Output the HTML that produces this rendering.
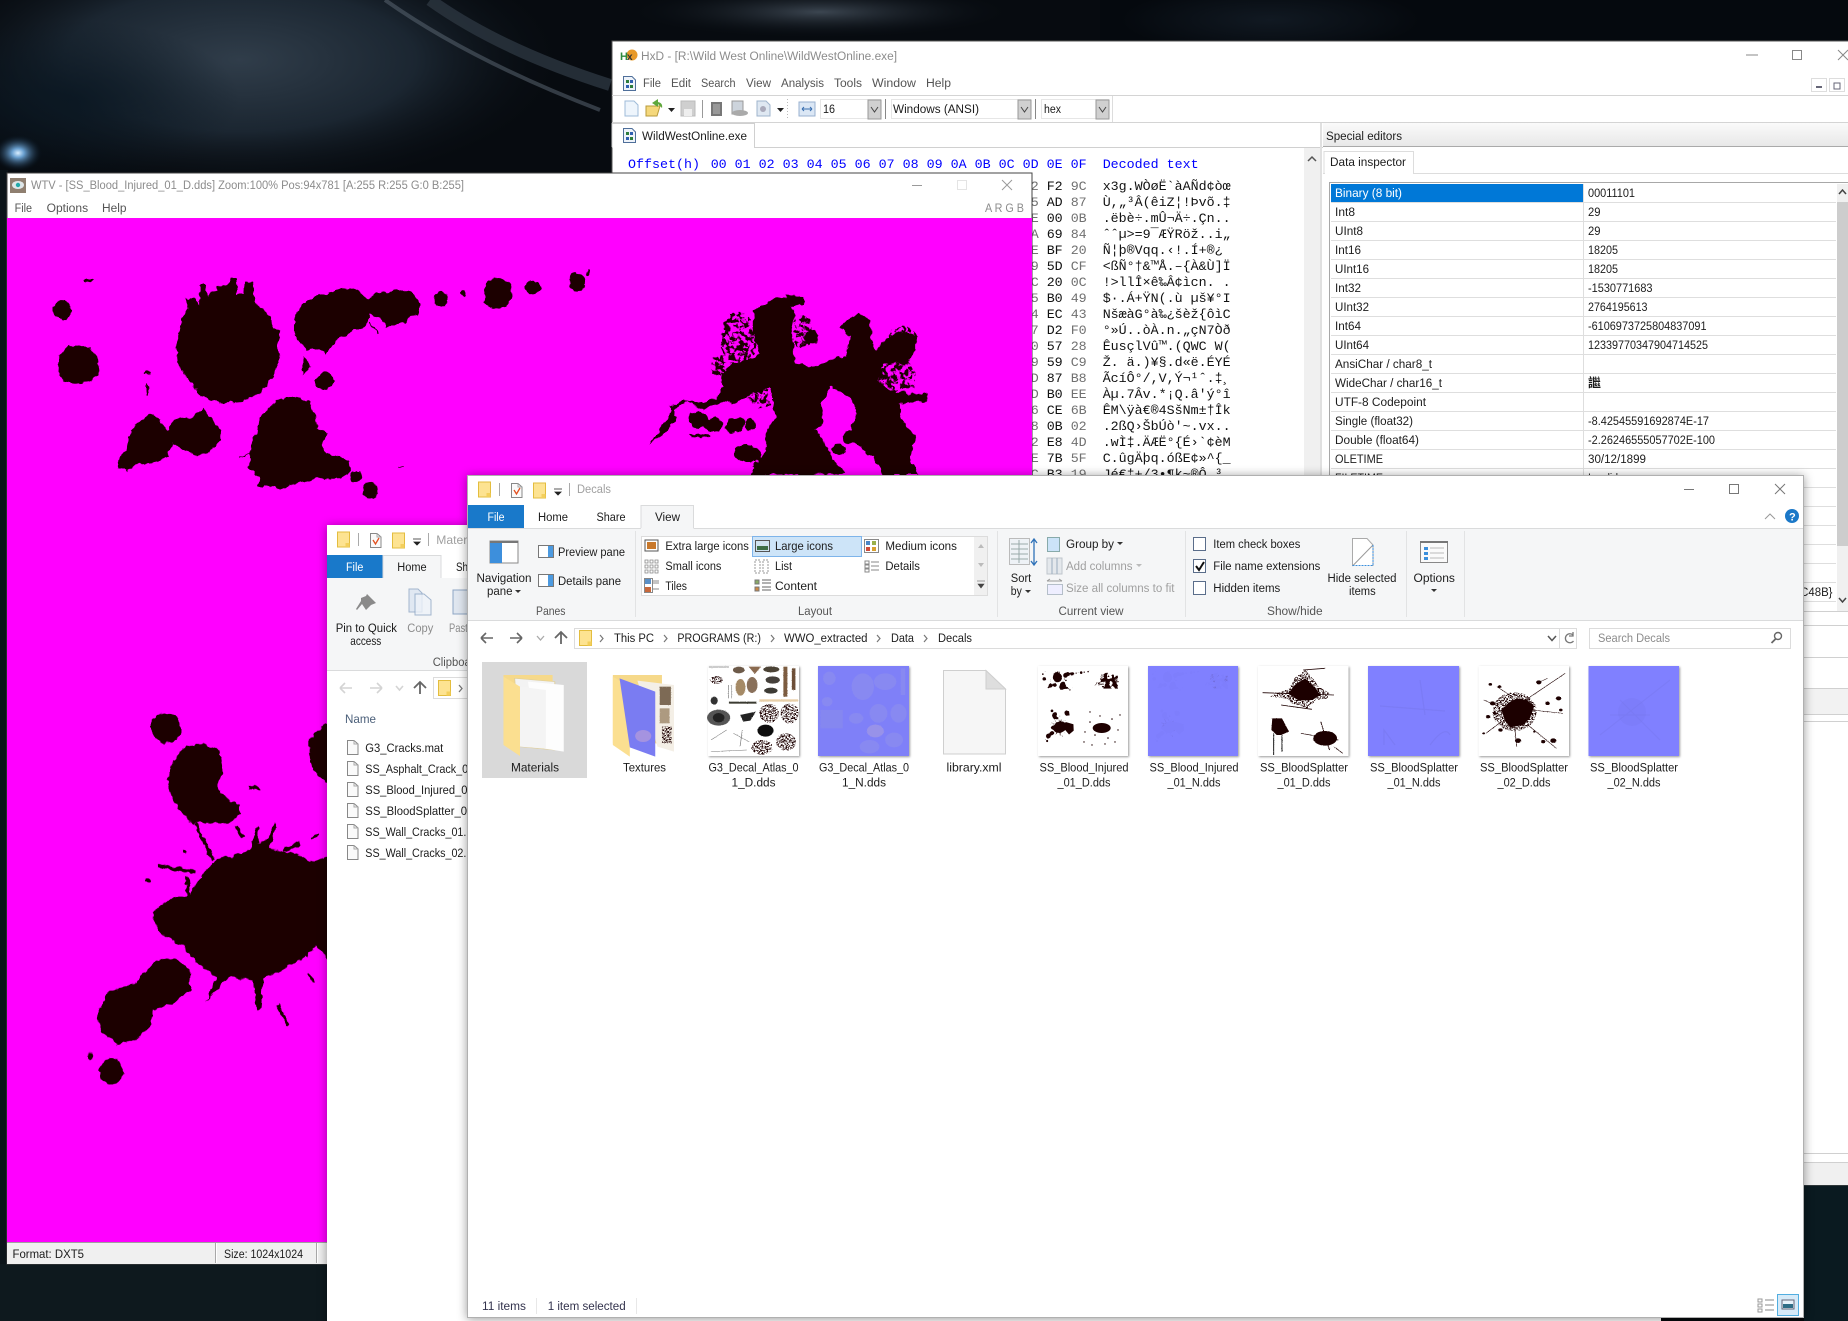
<!DOCTYPE html>
<html><head><meta charset="utf-8"><title>Desktop</title>
<style>
html,body{margin:0;padding:0;background:#070b10;width:1848px;height:1321px;overflow:hidden}
svg{display:block;position:absolute;left:0;top:0}
text{font-family:"Liberation Sans",sans-serif;font-size:12.4px;fill:#1c1c1c;white-space:pre}
.m{font-family:"Liberation Mono",monospace;font-size:13.33px;fill:#111}
.g{fill:#707070}
.b{fill:#0000ff}
.i{fill:#8c8c8c}
.d{fill:#a0a0a0}
.n{fill:#555}
.a{fill:#1e0000;stroke:none}
</style></head><body>
<svg xmlns="http://www.w3.org/2000/svg" width="1848" height="1321" viewBox="0 0 1848 1321">
<defs>
<radialGradient id="neb" cx=".5" cy=".5" r=".5"><stop offset="0" stop-color="#303d4a"/><stop offset=".55" stop-color="#1b2631"/><stop offset="1" stop-color="#0a0f15" stop-opacity="0"/></radialGradient>
<radialGradient id="glow" cx=".5" cy=".5" r=".5"><stop offset="0" stop-color="#d9eeff"/><stop offset=".25" stop-color="#6aa0d0"/><stop offset="1" stop-color="#0a1a2a" stop-opacity="0"/></radialGradient>
<radialGradient id="ship" cx=".5" cy=".5" r=".5"><stop offset="0" stop-color="#3c4651"/><stop offset="1" stop-color="#0a0f15" stop-opacity="0"/></radialGradient>
<radialGradient id="dk" cx=".5" cy=".5" r=".5"><stop offset="0" stop-color="#0a1722" stop-opacity=".9"/><stop offset="1" stop-color="#0a1722" stop-opacity="0"/></radialGradient>
<radialGradient id="dr" cx=".5" cy=".5" r=".5"><stop offset="0" stop-color="#141d27" stop-opacity=".8"/><stop offset="1" stop-color="#141d27" stop-opacity="0"/></radialGradient>
<linearGradient id="se" x1="0" y1="0" x2="0" y2="1"><stop offset="0" stop-color="#fafafa"/><stop offset="1" stop-color="#e8e8e8"/></linearGradient>
<filter id="sh" x="-5%" y="-5%" width="110%" height="110%"><feDropShadow dx="0" dy="1" stdDeviation="5" flood-color="#000" flood-opacity=".4"/></filter>
<filter id="ts" x="-10%" y="-10%" width="125%" height="125%"><feDropShadow dx="1" dy="1" stdDeviation="1" flood-color="#000" flood-opacity=".4"/></filter>
<filter id="rough" x="0" y="0" width="100%" height="100%" filterUnits="objectBoundingBox"><feTurbulence type="fractalNoise" baseFrequency=".14" numOctaves="2" seed="4"/><feDisplacementMap in="SourceGraphic" scale="6" xChannelSelector="R" yChannelSelector="G"/></filter>
<filter id="r2" x="-5%" y="-5%" width="110%" height="110%"><feTurbulence type="fractalNoise" baseFrequency=".6" numOctaves="2" seed="7"/><feDisplacementMap in="SourceGraphic" scale="3" xChannelSelector="R" yChannelSelector="G"/></filter>
<filter id="sp" x="0" y="0" width="100%" height="100%" color-interpolation-filters="sRGB"><feTurbulence type="fractalNoise" baseFrequency=".07" numOctaves="3" seed="3" result="n"/><feColorMatrix in="n" type="matrix" values="0 0 0 0 .118  0 0 0 0 0  0 0 0 0 0  12 0 0 0 -5.6" result="t"/><feComposite in="t" in2="SourceAlpha" operator="in"/></filter>
<filter id="spf" x="0" y="0" width="100%" height="100%" color-interpolation-filters="sRGB"><feTurbulence type="fractalNoise" baseFrequency=".28" numOctaves="2" seed="9" result="n"/><feColorMatrix in="n" type="matrix" values="0 0 0 0 .118  0 0 0 0 0  0 0 0 0 0  14 0 0 0 -6.8" result="t"/><feComposite in="t" in2="SourceAlpha" operator="in"/></filter>

<g id="art">
<g transform="translate(0,170) scale(.3953,.3333)">
<polygon points="470,385 490,385 505,405 505,345 520,345 525,380 550,350 575,345 585,320 598,325 600,375 618,372 620,335 635,335 645,400 675,425 695,470 710,485 700,530 708,565 690,620 660,670 610,695 555,700 500,670 480,630 450,580 445,525 458,460 475,410"/>
<polygon points="745,440 765,400 800,380 840,365 870,350 905,362 930,385 960,368 1020,358 1050,375 1062,405 1055,435 1030,440 1030,462 1000,460 975,472 965,445 935,430 925,470 880,490 850,515 825,552 800,535 775,540 760,520 745,490"/>
<path d="M935 460L958 490" stroke="#1e0000" stroke-width="4"/>
<polygon points="765,555 785,590 765,620"/>
<ellipse cx="821" cy="634" rx="23" ry="27"/><ellipse cx="1115" cy="387" rx="17" ry="23"/><ellipse cx="1172" cy="371" rx="8" ry="9"/><ellipse cx="1260" cy="371" rx="36" ry="47"/><ellipse cx="1348" cy="352" rx="20" ry="21"/><ellipse cx="1460" cy="336" rx="21" ry="26"/><ellipse cx="1487" cy="306" rx="4" ry="8"/>
<ellipse cx="157" cy="421" rx="23" ry="29"/><ellipse cx="223" cy="332" rx="13" ry="6"/>
<polygon points="150,560 175,530 225,530 248,570 252,610 225,635 190,640 160,630 148,600"/>
<ellipse cx="373" cy="608" rx="8" ry="4"/><ellipse cx="371" cy="660" rx="3" ry="18"/>
<polygon points="295,870 320,840 330,780 375,730 400,745 425,780 440,750 490,740 515,712 525,735 555,775 558,810 530,850 490,855 435,820 425,860 385,880 340,885 320,905 298,895"/>
<polygon points="655,745 700,690 745,678 785,695 800,740 800,775 830,790 815,825 830,850 880,870 888,905 860,925 800,925 760,935 710,958 670,945 660,955 650,950 655,925 630,890 635,830 650,790"/>
<ellipse cx="901" cy="920" rx="14" ry="16"/><ellipse cx="936" cy="960" rx="20" ry="24"/>
<path d="M607 865L635 848M1010 892L1025 890" stroke="#1e0000" stroke-width="3"/>
</g>
<g transform="translate(620,270) scale(.3333)">
<polygon points="440,100 470,80 500,85 525,130 515,180 520,230 525,280 575,290 610,280 640,265 665,290 660,345 630,350 605,400 610,460 585,480 610,510 640,570 680,610 390,615 440,530 440,480 470,440 450,350 400,370 340,400 320,390 250,420 200,395 160,420 170,450 130,490 85,530 120,480 150,440 150,410 190,390 240,400 290,385 310,350 300,310 340,280 420,255 400,200 400,120"/>
<polygon points="500,75 550,80 552,100 520,112 495,95"/>
<polygon points="680,150 720,130 750,150 755,220 770,240 800,205 850,180 890,200 890,240 860,280 790,280 775,330 800,360 860,370 925,370 920,395 840,400 840,430 860,470 890,500 870,560 895,615 790,615 760,560 700,520 690,490 710,430 690,380 640,355 610,300 640,265 680,260 690,200 660,170"/>
<ellipse cx="355" cy="210" rx="52" ry="85" filter="url(#sp)"/><ellipse cx="545" cy="185" rx="30" ry="48" filter="url(#sp)"/><ellipse cx="832" cy="325" rx="55" ry="62" filter="url(#sp)"/><ellipse cx="300" cy="285" rx="30" ry="30" filter="url(#sp)"/><ellipse cx="425" cy="375" rx="38" ry="38" filter="url(#sp)"/><ellipse cx="850" cy="205" rx="45" ry="35" filter="url(#sp)"/><ellipse cx="445" cy="580" rx="50" ry="32" filter="url(#sp)"/>
<ellipse cx="235" cy="450" rx="30" ry="25"/><ellipse cx="280" cy="465" rx="28" ry="20"/><ellipse cx="345" cy="465" rx="30" ry="22" transform="rotate(-25 345 465)"/><ellipse cx="392" cy="463" rx="16" ry="18"/><ellipse cx="380" cy="550" rx="40" ry="25"/><ellipse cx="240" cy="497" rx="30" ry="6"/><ellipse cx="575" cy="200" rx="22" ry="20"/><ellipse cx="690" cy="500" rx="20" ry="22"/><ellipse cx="655" cy="540" rx="20" ry="16"/>
</g>
<g transform="translate(60,680) scale(.3333)">
<circle cx="318" cy="145" r="45"/>
<polygon points="380,200 430,190 480,210 490,270 470,320 490,350 540,375 540,405 500,435 420,425 400,430 365,400 335,350 320,300 340,240"/>
<polygon points="280,700 320,660 380,650 430,590 470,535 510,530 570,510 585,450 595,435 595,490 620,480 645,430 650,440 630,505 700,520 760,545 800,530 1050,600 1060,820 900,950 770,800 720,840 650,880 610,895 605,985 590,990 580,900 510,890 470,925 440,965 450,930 470,890 410,850 370,800 300,760 280,720"/>
<polygon points="240,890 290,840 350,835 395,880 390,930 340,970 280,990 270,1040 230,1075 175,1095 130,1060 110,1005 140,940 190,920 235,910"/>
<polygon points="745,180 800,130 900,160 920,300 800,310 760,270 745,220"/>
<ellipse cx="153" cy="1175" rx="36" ry="38"/><circle cx="91" cy="1128" r="10"/>
<path d="M295 555Q350 570 405 575M320 665L385 650M380 590L385 650M655 975L685 1035M405 430L460 540M430 590L460 550M530 440L550 475M670 510L720 490M565 323L600 323M745 830L725 800" stroke="#1e0000" stroke-width="10" fill="none"/>
<circle cx="375" cy="517" r="6"/><circle cx="264" cy="601" r="6"/><ellipse cx="755" cy="895" rx="4" ry="16" transform="rotate(-40 755 895)"/><ellipse cx="765" cy="470" rx="4" ry="16" transform="rotate(50 765 470)"/>
</g>
</g>
<g id="fsm"><rect x="0" y="0" width="12" height="15" fill="#fde391" stroke="#e3bd3e"/><rect x="8" y="11" width="4" height="4" fill="#f3cf5c"/></g>
<g id="fdoc"><path d="M.5 .5H7L11 4V14.5H.5Z" fill="#fafafa" stroke="#888"/><path d="M7 .5V4H11" fill="none" stroke="#aaa"/></g>
<g id="hxf"><path d="M.5 .5H9L12.500 4V14.500H.5Z" fill="#eef3fa" stroke="#4f6f9a"/><rect x="3" y="4" width="3" height="3" fill="#2e7d3c"/><rect x="7" y="4" width="3" height="3" fill="#2f5fb0"/><rect x="3" y="9" width="3" height="3" fill="#2f5fb0"/><rect x="7" y="9" width="3" height="3" fill="#2e7d3c"/></g>
</defs>

<!-- desktop -->
<rect width="1848" height="1321" fill="#070b10"/>
<ellipse cx="240" cy="60" rx="320" ry="130" fill="url(#neb)"/>
<ellipse cx="70" cy="100" rx="170" ry="80" fill="url(#dk)"/>
<path d="M385 0Q470 60 600 110" stroke="#5f6b77" stroke-width="4" fill="none" opacity=".5"/>
<path d="M430 0Q500 50 610 85" stroke="#2c3640" stroke-width="12" fill="none" opacity=".8"/>
<ellipse cx="18" cy="153" rx="24" ry="18" fill="url(#glow)"/>
<rect x="0" y="170" width="8" height="1151" fill="#0b1419"/>
<ellipse cx="820" cy="12" rx="190" ry="26" fill="url(#ship)"/>
<rect x="1100" y="0" width="748" height="41" fill="#05090e"/>
<ellipse cx="1270" cy="20" rx="150" ry="34" fill="url(#dr)"/>
<rect x="0" y="1264" width="330" height="57" fill="#0e191e"/>
<rect x="1661" y="1318" width="187" height="3" fill="#06090c"/>
<rect x="1804" y="1185" width="44" height="136" fill="#0a1a20"/>

<!-- HxD -->
<rect x="612" y="41" width="1260" height="1144" fill="#fff" stroke="#555"/>
<circle cx="632" cy="55" r="5.500" fill="#e89a2a"/>
<text x="620" y="60" style="font-size:11px;font-weight:bold;fill:#2e8b3e">H</text><text x="627" y="60" style="font-size:10px;font-weight:bold;fill:#333">x</text>
<text x="641" y="60" class="i" textLength="256" lengthAdjust="spacingAndGlyphs">HxD - [R:\Wild West Online\WildWestOnline.exe]</text>
<path d="M1746 55H1758" stroke="#888"/><rect x="1792.500" y="50.500" width="9" height="9" fill="none" stroke="#888"/><path d="M1838 50L1848 60M1848 50L1838 60" stroke="#888"/>
<use href="#hxf" transform="translate(623,76)"/>
<text x="643" y="87" class="n" textLength="18" lengthAdjust="spacingAndGlyphs">File</text>
<text x="671" y="87" class="n" textLength="20" lengthAdjust="spacingAndGlyphs">Edit</text>
<text x="701" y="87" class="n" textLength="34.500" lengthAdjust="spacingAndGlyphs">Search</text>
<text x="746" y="87" class="n" textLength="25" lengthAdjust="spacingAndGlyphs">View</text>
<text x="781" y="87" class="n" textLength="43" lengthAdjust="spacingAndGlyphs">Analysis</text>
<text x="834" y="87" class="n" textLength="28" lengthAdjust="spacingAndGlyphs">Tools</text>
<text x="872" y="87" class="n" textLength="44" lengthAdjust="spacingAndGlyphs">Window</text>
<text x="926" y="87" class="n" textLength="25" lengthAdjust="spacingAndGlyphs">Help</text>
<rect x="1811.500" y="78.500" width="15" height="13" fill="#fff" stroke="#ddd"/><rect x="1816" y="86" width="6" height="2" fill="#667"/>
<rect x="1829.500" y="78.500" width="15" height="13" fill="#fff" stroke="#ddd"/><rect x="1834" y="83" width="6" height="6" fill="none" stroke="#667"/>
<path d="M612 95.500H1848M612 122.500H1848" stroke="#d4d4d4"/>
<path d="M625 101H634L638 105V116H625Z" fill="#eef5fc" stroke="#9fbbd8"/>
<path d="M646 106H660L657 116H646Z" fill="#f5d87c" stroke="#b89a3a"/><path d="M652 103L658 99V102Q663 103 662 108L658 104V107Z" fill="#5ea83d"/>
<path d="M668 108H675L671.500 112Z" fill="#222"/>
<rect x="681" y="101" width="14" height="15" fill="#cfcfcf" stroke="#bbb"/><rect x="684" y="109" width="8" height="7" fill="#eee"/>
<path d="M702.500 100V118" stroke="#999"/>
<rect x="711" y="102" width="11" height="14" fill="#777"/><rect x="713" y="104" width="7" height="10" fill="#999"/>
<rect x="732" y="101" width="11" height="13" fill="#cdd4dc" stroke="#999"/><ellipse cx="740" cy="113" rx="8" ry="3" fill="#aaa"/>
<path d="M757 101H766L770 105V116H757Z" fill="#dfe8f2" stroke="#9fb4cc"/><circle cx="763" cy="109" r="3" fill="#aab"/>
<path d="M777 108H784L780.500 112Z" fill="#222"/>
<path d="M787.500 99V120" stroke="#bbb" stroke-dasharray="1 2"/>
<rect x="799" y="102" width="16" height="14" fill="#dbe7f5" stroke="#9ab2d0"/><path d="M802 109H812M802 109L804 107M802 109L804 111M812 109L810 107M812 109L810 111" stroke="#3a6fb0"/>
<rect x="820.500" y="99.500" width="60" height="19" fill="#fff" stroke="#e6e6e6"/><rect x="868" y="100" width="13" height="19" fill="#d0d0d0" stroke="#999"/><path d="M871 107L874.500 112L878 107" fill="none" stroke="#444"/>
<text x="823" y="113" textLength="12" lengthAdjust="spacingAndGlyphs">16</text>
<path d="M885.500 99V119" stroke="#888"/>
<rect x="891.500" y="99.500" width="139" height="19" fill="#fff" stroke="#e6e6e6"/><rect x="1018" y="100" width="13" height="19" fill="#d0d0d0" stroke="#999"/><path d="M1021 107L1024.500 112L1028 107" fill="none" stroke="#444"/>
<text x="893" y="113" textLength="86" lengthAdjust="spacingAndGlyphs">Windows (ANSI)</text>
<path d="M1035.500 99V119" stroke="#888"/>
<rect x="1041.500" y="99.500" width="67" height="19" fill="#fff" stroke="#e6e6e6"/><rect x="1096" y="100" width="13" height="19" fill="#d0d0d0" stroke="#999"/><path d="M1099 107L1102.500 112L1106 107" fill="none" stroke="#444"/>
<text x="1044" y="113" textLength="17" lengthAdjust="spacingAndGlyphs">hex</text>
<path d="M1112.500 96V122" stroke="#ddd"/>
<!-- tabs -->
<path d="M612 147.500H1323" stroke="#d0d0d0"/><path d="M612 147V123.500H754.500V147" fill="#fff" stroke="#d0d0d0"/><rect x="613" y="146" width="141" height="3" fill="#fff"/>
<use href="#hxf" transform="translate(623,128)"/>
<text x="642" y="140" textLength="105" lengthAdjust="spacingAndGlyphs">WildWestOnline.exe</text>
<!-- hex -->
<text x="628" y="168" class="m b" xml:space="preserve">Offset(h)</text>
<text x="710.700" y="168" class="m b" xml:space="preserve">00 01 02 03 04 05 06 07 08 09 0A 0B 0C 0D 0E 0F</text>
<text x="1102.700" y="168" class="m b" xml:space="preserve">Decoded text</text>
<g class="hx">
<text x="1030.700" y="190" class="m g">2</text><text x="1046.700" y="190" class="m">F2</text><text x="1070.700" y="190" class="m g">9C</text><text x="1102.700" y="190" class="m" xml:space="preserve">x3g.WÒøË`àAÑd¢òœ</text>
<text x="1030.700" y="206" class="m g">5</text><text x="1046.700" y="206" class="m">AD</text><text x="1070.700" y="206" class="m g">87</text><text x="1102.700" y="206" class="m" xml:space="preserve">Ù,„³Â(êiZ¦!Þvõ.‡</text>
<text x="1030.700" y="222" class="m g">E</text><text x="1046.700" y="222" class="m">00</text><text x="1070.700" y="222" class="m g">0B</text><text x="1102.700" y="222" class="m" xml:space="preserve">.ëbè÷.mÛ¬Ä÷.Çn..</text>
<text x="1030.700" y="238" class="m g">A</text><text x="1046.700" y="238" class="m">69</text><text x="1070.700" y="238" class="m g">84</text><text x="1102.700" y="238" class="m" xml:space="preserve">ˆˆµ&gt;=9¯ÆŸRöž..i„</text>
<text x="1030.700" y="254" class="m g">E</text><text x="1046.700" y="254" class="m">BF</text><text x="1070.700" y="254" class="m g">20</text><text x="1102.700" y="254" class="m" xml:space="preserve">Ñ¦þ®Vqq.‹!.Í+®¿</text>
<text x="1030.700" y="270" class="m g">9</text><text x="1046.700" y="270" class="m">5D</text><text x="1070.700" y="270" class="m g">CF</text><text x="1102.700" y="270" class="m" xml:space="preserve">&lt;ßÑ°†&amp;™Å.–{À&amp;Ù]Ï</text>
<text x="1030.700" y="286" class="m g">C</text><text x="1046.700" y="286" class="m">20</text><text x="1070.700" y="286" class="m g">0C</text><text x="1102.700" y="286" class="m" xml:space="preserve">!&gt;llÎ×ê‰Â¢ìcn. .</text>
<text x="1030.700" y="302" class="m g">5</text><text x="1046.700" y="302" class="m">B0</text><text x="1070.700" y="302" class="m g">49</text><text x="1102.700" y="302" class="m" xml:space="preserve">$·.Á+ŸN(.ù µš¥°I</text>
<text x="1030.700" y="318" class="m g">4</text><text x="1046.700" y="318" class="m">EC</text><text x="1070.700" y="318" class="m g">43</text><text x="1102.700" y="318" class="m" xml:space="preserve">NšæàG°à‰¿šèž{ôìC</text>
<text x="1030.700" y="334" class="m g">7</text><text x="1046.700" y="334" class="m">D2</text><text x="1070.700" y="334" class="m g">F0</text><text x="1102.700" y="334" class="m" xml:space="preserve">°»Ú..òÀ.n.„çN7Òð</text>
<text x="1030.700" y="350" class="m g">0</text><text x="1046.700" y="350" class="m">57</text><text x="1070.700" y="350" class="m g">28</text><text x="1102.700" y="350" class="m" xml:space="preserve">ÊusçlVû™.(QWC W(</text>
<text x="1030.700" y="366" class="m g">9</text><text x="1046.700" y="366" class="m">59</text><text x="1070.700" y="366" class="m g">C9</text><text x="1102.700" y="366" class="m" xml:space="preserve">Ž. ä.)¥§.d«ë.ÉYÉ</text>
<text x="1030.700" y="382" class="m g">D</text><text x="1046.700" y="382" class="m">87</text><text x="1070.700" y="382" class="m g">B8</text><text x="1102.700" y="382" class="m" xml:space="preserve">ÃcíÔ°/,V,Ý¬¹ˆ.‡¸</text>
<text x="1030.700" y="398" class="m g">D</text><text x="1046.700" y="398" class="m">B0</text><text x="1070.700" y="398" class="m g">EE</text><text x="1102.700" y="398" class="m" xml:space="preserve">Àµ.7Âv.*¡Q.â'ý°î</text>
<text x="1030.700" y="414" class="m g">6</text><text x="1046.700" y="414" class="m">CE</text><text x="1070.700" y="414" class="m g">6B</text><text x="1102.700" y="414" class="m" xml:space="preserve">ÊM\ÿà€®4SšNm±†Îk</text>
<text x="1030.700" y="430" class="m g">8</text><text x="1046.700" y="430" class="m">0B</text><text x="1070.700" y="430" class="m g">02</text><text x="1102.700" y="430" class="m" xml:space="preserve">.2ßQ›ŠbÚò'~.vx..</text>
<text x="1030.700" y="446" class="m g">2</text><text x="1046.700" y="446" class="m">E8</text><text x="1070.700" y="446" class="m g">4D</text><text x="1102.700" y="446" class="m" xml:space="preserve">.wÌ‡.ÄÆË°{É›`¢èM</text>
<text x="1030.700" y="462" class="m g">E</text><text x="1046.700" y="462" class="m">7B</text><text x="1070.700" y="462" class="m g">5F</text><text x="1102.700" y="462" class="m" xml:space="preserve">C.ûgÄþq.óßE¢»^{_</text>
<text x="1030.700" y="478" class="m g">C</text><text x="1046.700" y="478" class="m">B3</text><text x="1070.700" y="478" class="m g">19</text><text x="1102.700" y="478" class="m" xml:space="preserve">Jé€‡+/3•¶k~®Ô.³</text>
</g>
<!-- hex scrollbar -->
<rect x="1304" y="148" width="16" height="400" fill="#f0f0f0"/>
<path d="M1308 161L1312 157L1316 161" fill="none" stroke="#555" stroke-width="1.500"/>
<rect x="1320" y="123" width="2" height="1062" fill="#e0e0e0"/>
<!-- special editors -->
<rect x="1323" y="123" width="525" height="23" fill="url(#se)"/>
<path d="M1323 146.500H1848" stroke="#aaa"/>
<text x="1326" y="140" textLength="76" lengthAdjust="spacingAndGlyphs">Special editors</text>
<path d="M1323 173.500H1848" stroke="#ddd"/>
<path d="M1324 173V151.500H1413.500V173" fill="#fff" stroke="#ddd"/><rect x="1325" y="172" width="88" height="3" fill="#fff"/>
<text x="1330" y="166" textLength="76" lengthAdjust="spacingAndGlyphs">Data inspector</text>
<path d="M1329.500 183V611M1329 182.500H1848" stroke="#a8a8a8"/>
<rect x="1331" y="184" width="252" height="18" fill="#0078d7"/>
<g stroke="#dedede">
<path d="M1331 202.500H1836M1331 221.500H1836M1331 240.500H1836M1331 259.500H1836M1331 278.500H1836M1331 297.500H1836M1331 316.500H1836M1331 335.500H1836M1331 354.500H1836M1331 373.500H1836M1331 392.500H1836M1331 411.500H1836M1331 430.500H1836M1331 449.500H1836M1331 468.500H1836M1331 487.500H1836M1331 506.500H1836M1331 525.500H1836M1331 544.500H1836M1331 563.500H1836M1331 582.500H1836M1331 601.500H1836"/>
<path d="M1583.500 184V611"/>
</g>
<text x="1335" y="197" style="fill:#fff" textLength="67" lengthAdjust="spacingAndGlyphs">Binary (8 bit)</text>
<text x="1335" y="216" textLength="20" lengthAdjust="spacingAndGlyphs">Int8</text>
<text x="1335" y="235" textLength="28" lengthAdjust="spacingAndGlyphs">UInt8</text>
<text x="1335" y="254" textLength="26" lengthAdjust="spacingAndGlyphs">Int16</text>
<text x="1335" y="273" textLength="34" lengthAdjust="spacingAndGlyphs">UInt16</text>
<text x="1335" y="292" textLength="26" lengthAdjust="spacingAndGlyphs">Int32</text>
<text x="1335" y="311" textLength="34" lengthAdjust="spacingAndGlyphs">UInt32</text>
<text x="1335" y="330" textLength="26" lengthAdjust="spacingAndGlyphs">Int64</text>
<text x="1335" y="349" textLength="34" lengthAdjust="spacingAndGlyphs">UInt64</text>
<text x="1335" y="368" textLength="97" lengthAdjust="spacingAndGlyphs">AnsiChar / char8_t</text>
<text x="1335" y="387" textLength="107" lengthAdjust="spacingAndGlyphs">WideChar / char16_t</text>
<text x="1335" y="406" textLength="91" lengthAdjust="spacingAndGlyphs">UTF-8 Codepoint</text>
<text x="1335" y="425" textLength="78" lengthAdjust="spacingAndGlyphs">Single (float32)</text>
<text x="1335" y="444" textLength="84" lengthAdjust="spacingAndGlyphs">Double (float64)</text>
<text x="1335" y="463" textLength="48" lengthAdjust="spacingAndGlyphs">OLETIME</text>
<text x="1335" y="482" textLength="48" lengthAdjust="spacingAndGlyphs">FILETIME</text>
<text x="1588" y="197" textLength="47" lengthAdjust="spacingAndGlyphs">00011101</text>
<text x="1588" y="216" textLength="12.500" lengthAdjust="spacingAndGlyphs">29</text>
<text x="1588" y="235" textLength="12.500" lengthAdjust="spacingAndGlyphs">29</text>
<text x="1588" y="254" textLength="30" lengthAdjust="spacingAndGlyphs">18205</text>
<text x="1588" y="273" textLength="30" lengthAdjust="spacingAndGlyphs">18205</text>
<text x="1588" y="292" textLength="64.500" lengthAdjust="spacingAndGlyphs">-1530771683</text>
<text x="1588" y="311" textLength="59.500" lengthAdjust="spacingAndGlyphs">2764195613</text>
<text x="1588" y="330" textLength="118.500" lengthAdjust="spacingAndGlyphs">-6106973725804837091</text>
<text x="1588" y="349" textLength="120" lengthAdjust="spacingAndGlyphs">12339770347904714525</text>
<text x="1588" y="387" style="font-family:'Noto Sans CJK SC',sans-serif;font-weight:bold" textLength="13" lengthAdjust="spacingAndGlyphs">䜝</text>
<text x="1588" y="425" textLength="121" lengthAdjust="spacingAndGlyphs">-8.42545591692874E-17</text>
<text x="1588" y="444" textLength="127" lengthAdjust="spacingAndGlyphs">-2.26246555057702E-100</text>
<text x="1588" y="463" textLength="58" lengthAdjust="spacingAndGlyphs">30/12/1899</text>
<text x="1588" y="482" textLength="30" lengthAdjust="spacingAndGlyphs">Invalid</text>
<text x="1790" y="596" textLength="42.500" lengthAdjust="spacingAndGlyphs">{..C48B}</text>
<rect x="1837" y="184" width="11" height="427" fill="#f0f0f0"/>
<rect x="1837" y="202" width="11" height="344" fill="#cdcdcd"/>
<path d="M1839 194L1842.500 190L1846 194M1839 598L1842.500 602L1846 598" fill="none" stroke="#444" stroke-width="1.500"/>
<path d="M1804 611.500H1848M1804 625.500H1848M1804 657.500H1848M1804 688.500H1848M1804 714.500H1848M1804 721.500H1848M1804 1153.500H1848M1804 1162.500H1848" stroke="#d0d0d0"/>
<rect x="1804" y="689" width="44" height="25" fill="#f2f2f2"/>
<rect x="1804" y="1163" width="44" height="22" fill="#f0f0f0"/>

<!-- WTV -->
<rect x="7" y="173" width="1025" height="1091" fill="#fff" stroke="#444"/>
<rect x="10" y="178" width="16" height="15" fill="#8f7f70"/><ellipse cx="18" cy="185" rx="6" ry="4" fill="#dfe6e8"/><circle cx="18" cy="185" r="2.200" fill="#2aa"/>
<text x="31" y="189" class="i" textLength="433" lengthAdjust="spacingAndGlyphs">WTV - [SS_Blood_Injured_01_D.dds] Zoom:100% Pos:94x781 [A:255 R:255 G:0 B:255]</text>
<text x="14.600" y="212" class="n" textLength="17.400" lengthAdjust="spacingAndGlyphs">File</text>
<text x="46.600" y="212" class="n" textLength="41.500" lengthAdjust="spacingAndGlyphs">Options</text>
<text x="102" y="212" class="n" textLength="24.500" lengthAdjust="spacingAndGlyphs">Help</text>
<path d="M912 185.500H922" stroke="#9a9a9a"/><rect x="957.500" y="180.500" width="9" height="9" fill="none" stroke="#e4e4e4"/><path d="M1002 180L1012 190M1012 180L1002 190" stroke="#9a9a9a"/>
<text x="985" y="212" class="i" xml:space="preserve" textLength="39" lengthAdjust="spacingAndGlyphs">A R G B</text>
<rect x="7" y="218" width="1025" height="1024" fill="#ff00ff"/>
<g class="a" filter="url(#rough)"><use href="#art"/></g>
<rect x="7" y="1242" width="1025" height="22" fill="#f0f0f0"/>
<path d="M7 1242.500H1032" stroke="#a0a0a0"/><path d="M216.500 1243V1263M317.500 1243V1263" stroke="#fff"/><path d="M215.500 1243V1263M316.500 1243V1263" stroke="#a8a8a8"/>
<text x="12.500" y="1258" textLength="71.500" lengthAdjust="spacingAndGlyphs">Format: DXT5</text>
<text x="224" y="1258" textLength="79" lengthAdjust="spacingAndGlyphs">Size: 1024x1024</text>

<!-- Materials explorer -->
<g filter="url(#sh)"><rect x="327" y="525" width="1334" height="810" fill="#fff"/></g>
<use href="#fsm" transform="translate(337.500,532)"/>
<path d="M358.500 533V546" stroke="#aaa"/>
<use href="#fdoc" transform="translate(370,533)"/><path d="M373 540L375.500 544L379 538" fill="none" stroke="#e2501f" stroke-width="1.300"/>
<use href="#fsm" transform="translate(392.500,533)"/>
<path d="M413 539H421M414 542H420L417 545Z" fill="#222" stroke="#222" stroke-width=".8"/>
<path d="M428.500 533V546" stroke="#aaa"/>
<text x="436.300" y="544" class="d" textLength="31" lengthAdjust="spacingAndGlyphs">Mater</text>
<rect x="327" y="555" width="56" height="23" fill="#1979ca"/>
<text x="346" y="571" style="fill:#fff" textLength="17.300" lengthAdjust="spacingAndGlyphs">File</text>
<rect x="327" y="578" width="140" height="92" fill="#f5f6f7"/>
<path d="M383 578V555.500H441V578" fill="#f5f6f7" stroke="#dadbdc"/>
<text x="397.300" y="571" textLength="29.300" lengthAdjust="spacingAndGlyphs">Home</text>
<text x="456" y="571" textLength="12" lengthAdjust="spacingAndGlyphs">Sh</text>
<path d="M327 670.500H467" stroke="#dadbdc"/>
<path d="M367 594L376 603L371 605L366 610L362 604L357 610L356 609L361 601L361 598L366 596Z" fill="#8a8a8a"/>
<text x="335.700" y="632" textLength="61.300" lengthAdjust="spacingAndGlyphs">Pin to Quick</text>
<text x="350.300" y="645" textLength="31" lengthAdjust="spacingAndGlyphs">access</text>
<path d="M409 589H418L422 593V612H409Z" fill="#dbe5f1" stroke="#8ea6c4" opacity=".8"/><path d="M415 594H424L431 600V615H415Z" fill="#eef3f9" stroke="#8ea6c4" opacity=".8"/>
<text x="407.300" y="632" class="i" textLength="26" lengthAdjust="spacingAndGlyphs">Copy</text>
<rect x="453" y="590" width="16" height="24" fill="#dfe6ef" stroke="#8ea6c4"/>
<text x="449" y="632" class="i" textLength="24" lengthAdjust="spacingAndGlyphs">Paste</text>
<text x="432.700" y="666" class="n" textLength="48" lengthAdjust="spacingAndGlyphs">Clipboard</text>
<path d="M340 688H352M340 688L345 683M340 688L345 693M370 688H382M382 688L377 683M382 688L377 693M396 686L399.500 690L403 686" fill="none" stroke="#d4d4d4" stroke-width="1.600"/>
<path d="M420 694V682M414 688L420 682L426 688" fill="none" stroke="#666" stroke-width="1.800"/>
<rect x="433.500" y="677.500" width="40" height="21" fill="#fff" stroke="#dcdcdc"/>
<use href="#fsm" transform="translate(438.500,680.500)"/>
<path d="M459 685L462 688.500L459 692" fill="none" stroke="#777" stroke-width="1.300"/>
<text x="345" y="723" style="fill:#4c607a" textLength="31" lengthAdjust="spacingAndGlyphs">Name</text>
<use href="#fdoc" transform="translate(347,740)"/><text x="365.300" y="752" textLength="78" lengthAdjust="spacingAndGlyphs">G3_Cracks.mat</text>
<use href="#fdoc" transform="translate(347,761)"/><text x="365.300" y="773" textLength="130" lengthAdjust="spacingAndGlyphs">SS_Asphalt_Crack_01.mat</text>
<use href="#fdoc" transform="translate(347,782)"/><text x="365.300" y="794" textLength="130" lengthAdjust="spacingAndGlyphs">SS_Blood_Injured_01.mat</text>
<use href="#fdoc" transform="translate(347,803)"/><text x="365.300" y="815" textLength="130" lengthAdjust="spacingAndGlyphs">SS_BloodSplatter_01.mat</text>
<use href="#fdoc" transform="translate(347,824)"/><text x="365.300" y="836" textLength="119" lengthAdjust="spacingAndGlyphs">SS_Wall_Cracks_01.mat</text>
<use href="#fdoc" transform="translate(347,845)"/><text x="365.300" y="857" textLength="119" lengthAdjust="spacingAndGlyphs">SS_Wall_Cracks_02.mat</text>

<!-- Decals explorer -->
<g filter="url(#sh)"><rect x="467.500" y="475.500" width="1336" height="842" fill="#fff" stroke="#b0b0b0"/></g>
<use href="#fsm" transform="translate(478.500,482)"/>
<path d="M499.500 483V496" stroke="#aaa"/>
<use href="#fdoc" transform="translate(511,483)"/><path d="M514 490L516.500 494L520 488" fill="none" stroke="#e2501f" stroke-width="1.300"/>
<use href="#fsm" transform="translate(533.500,483)"/>
<path d="M554 489H562M555 492H561L558 495Z" fill="#222" stroke="#222" stroke-width=".8"/>
<path d="M569.500 483V496" stroke="#aaa"/>
<text x="577" y="493" class="d" textLength="34" lengthAdjust="spacingAndGlyphs">Decals</text>
<path d="M1684 489.500H1694" stroke="#777"/><rect x="1729.500" y="484.500" width="9" height="9" fill="none" stroke="#777"/><path d="M1775 484L1785 494M1785 484L1775 494" stroke="#777"/>
<path d="M1765 519L1770 514L1775 519" fill="none" stroke="#999"/>
<circle cx="1792" cy="516" r="7" fill="#1b78c8"/><text x="1789" y="520.500" style="fill:#fff;font-weight:bold;font-size:11px">?</text>
<rect x="468" y="505" width="56" height="23" fill="#1979ca"/>
<text x="487.500" y="521" style="fill:#fff" textLength="17" lengthAdjust="spacingAndGlyphs">File</text>
<text x="538" y="521" textLength="30" lengthAdjust="spacingAndGlyphs">Home</text>
<text x="596.500" y="521" textLength="29" lengthAdjust="spacingAndGlyphs">Share</text>
<rect x="468" y="528" width="1335" height="92" fill="#f5f6f7"/>
<path d="M468 528.500H641M693.500 528.500H1803M468 620.500H1803" stroke="#dadbdc"/>
<path d="M641 528V505.500H693.500V528" fill="#f5f6f7" stroke="#dadbdc"/>
<text x="655" y="521" textLength="25" lengthAdjust="spacingAndGlyphs">View</text>
<path d="M635.500 531V617M997.500 531V617M1185.500 531V617M1406.500 531V617M1464.500 531V617" stroke="#e2e3e4"/>
<!-- panes -->
<rect x="490" y="541" width="28" height="22" fill="#fff" stroke="#8a8a8a"/><rect x="490" y="541" width="12" height="22" fill="#3d8fdc"/><rect x="490" y="541" width="28" height="2" fill="#777"/>
<text x="476.500" y="582" textLength="55" lengthAdjust="spacingAndGlyphs">Navigation</text>
<text x="487" y="595" textLength="25.500" lengthAdjust="spacingAndGlyphs">pane</text><path d="M515 590H521L518 593Z" fill="#333"/>
<rect x="538.500" y="545.500" width="15" height="12" fill="#fff" stroke="#777"/><rect x="548" y="546" width="5" height="11" fill="#4c9ae0"/>
<text x="558" y="556" textLength="67" lengthAdjust="spacingAndGlyphs">Preview pane</text>
<rect x="538.500" y="574.500" width="15" height="12" fill="#fff" stroke="#777"/><rect x="548" y="575" width="5" height="11" fill="#4c9ae0"/>
<text x="558" y="585" textLength="63" lengthAdjust="spacingAndGlyphs">Details pane</text>
<text x="536" y="615" class="n" textLength="29.500" lengthAdjust="spacingAndGlyphs">Panes</text>
<!-- layout -->
<rect x="641.500" y="536.500" width="346" height="59" fill="#fff" stroke="#dcdcdc"/>
<rect x="974" y="537" width="13" height="58" fill="#f0f0f0"/>
<path d="M978 548H984L981 544ZM978 563H984L981 567Z" fill="#bbb"/><path d="M977 581H985M978 584H984L981 588Z" fill="#444" stroke="#444" stroke-width=".6"/>
<rect x="752.500" y="536.500" width="109" height="20" fill="#cde4f8" stroke="#7eb4ea"/>
<rect x="645" y="540" width="13" height="11" fill="#fff" stroke="#555"/><rect x="647" y="542" width="9" height="7" fill="#c8782b"/>
<rect x="755.500" y="540.500" width="14" height="11" fill="#cfe3f0" stroke="#555"/><rect x="757" y="546" width="11" height="4" fill="#3d6e46"/>
<rect x="864.500" y="539.500" width="14" height="13" fill="#fff" stroke="#888"/><rect x="866" y="541" width="4" height="4" fill="#4a86c8"/><rect x="872" y="541" width="4" height="4" fill="#9ab04a"/><rect x="866" y="547" width="4" height="4" fill="#d04a3a"/><rect x="872" y="547" width="4" height="4" fill="#d8a030"/>
<text x="665.400" y="550" textLength="83.500" lengthAdjust="spacingAndGlyphs">Extra large icons</text>
<text x="775" y="550" textLength="58" lengthAdjust="spacingAndGlyphs">Large icons</text>
<text x="885.400" y="550" textLength="71.500" lengthAdjust="spacingAndGlyphs">Medium icons</text>
<path d="M645 560h3v3h-3zM650 560h3v3h-3zM655 560h3v3h-3zM645 565h3v3h-3zM650 565h3v3h-3zM655 565h3v3h-3zM645 570h3v3h-3zM650 570h3v3h-3zM655 570h3v3h-3z" fill="#fff" stroke="#888" stroke-width=".8"/>
<path d="M755 560h5v13h-5zM763 560h5v13h-5z" fill="#fff" stroke="#999" stroke-dasharray="2 1"/>
<path d="M865 561h4v3h-4zM865 565h4v3h-4zM865 569h4v3h-4z" fill="#fff" stroke="#888"/><path d="M871 562H879M871 566H879M871 570H879" stroke="#888"/>
<text x="665.400" y="570" textLength="56" lengthAdjust="spacingAndGlyphs">Small icons</text>
<text x="775" y="570" textLength="17" lengthAdjust="spacingAndGlyphs">List</text>
<text x="885.400" y="570" textLength="34.500" lengthAdjust="spacingAndGlyphs">Details</text>
<rect x="645" y="579" width="6" height="5" fill="#5a8fc6"/><rect x="645" y="587" width="6" height="5" fill="#c8683a"/><path d="M653 581H659M653 583H659M653 589H659" stroke="#888"/><rect x="644.500" y="578.500" width="8" height="14" fill="none" stroke="#888"/>
<rect x="755" y="580" width="4" height="4" fill="#8a6" stroke="#777"/><rect x="755" y="587" width="4" height="4" fill="#c84" stroke="#777"/><path d="M762 580H771M762 583H771M762 587H771M762 590H771" stroke="#666"/>
<text x="665.400" y="590" textLength="21.500" lengthAdjust="spacingAndGlyphs">Tiles</text>
<text x="775" y="590" textLength="42" lengthAdjust="spacingAndGlyphs">Content</text>
<text x="798" y="615" class="n" textLength="34" lengthAdjust="spacingAndGlyphs">Layout</text>
<!-- current view -->
<rect x="1009.500" y="538.500" width="20" height="26" fill="#eef2f6" stroke="#bbb"/><path d="M1011 544H1028M1011 549H1028M1011 554H1028M1011 559H1028M1019 540V563" stroke="#9aa"/>
<path d="M1034 540V564M1031 543L1034 539L1037 543M1031 561L1034 565L1037 561" fill="none" stroke="#2f72b8" stroke-width="1.300"/>
<text x="1010.800" y="582" textLength="20.500" lengthAdjust="spacingAndGlyphs">Sort</text>
<text x="1010.800" y="595" textLength="11" lengthAdjust="spacingAndGlyphs">by</text><path d="M1025 590H1031L1028 593Z" fill="#333"/>
<rect x="1047.500" y="537.500" width="12" height="14" fill="#cbe3f8" stroke="#8aa"/>
<text x="1066" y="548" textLength="48" lengthAdjust="spacingAndGlyphs">Group by</text><path d="M1117 542H1123L1120 545Z" fill="#333"/>
<path d="M1047 558h15v16h-15z" fill="#e4e8ec" stroke="#c0c6cc"/><path d="M1052 558V574M1057 558V574" stroke="#9aacbe"/>
<text x="1066" y="570" class="d" textLength="66.500" lengthAdjust="spacingAndGlyphs">Add columns</text><path d="M1136 564H1142L1139 567Z" fill="#bbb"/>
<path d="M1047 581H1062M1047 581L1050 579M1062 581L1059 579" stroke="#999" fill="none"/><rect x="1047.500" y="584.500" width="15" height="10" fill="#eef" stroke="#b5bfc9"/>
<text x="1066" y="592" class="d" textLength="108.500" lengthAdjust="spacingAndGlyphs">Size all columns to fit</text>
<text x="1058.500" y="615" class="n" textLength="65" lengthAdjust="spacingAndGlyphs">Current view</text>
<!-- show/hide -->
<rect x="1193.500" y="537.500" width="12" height="13" fill="#fff" stroke="#5a6d8a"/>
<rect x="1193.500" y="559.500" width="12" height="13" fill="#fff" stroke="#5a6d8a"/><path d="M1196 566L1199 570L1204 562" fill="none" stroke="#111" stroke-width="2"/>
<rect x="1193.500" y="581.500" width="12" height="13" fill="#fff" stroke="#5a6d8a"/>
<text x="1213.300" y="548" textLength="87" lengthAdjust="spacingAndGlyphs">Item check boxes</text>
<text x="1213.300" y="570" textLength="107" lengthAdjust="spacingAndGlyphs">File name extensions</text>
<text x="1213.300" y="592" textLength="67" lengthAdjust="spacingAndGlyphs">Hidden items</text>
<text x="1267" y="615" class="n" textLength="55.600" lengthAdjust="spacingAndGlyphs">Show/hide</text>
<path d="M1352.500 566V538.500H1367L1373 545V566" fill="#fff" stroke="#aaa"/><path d="M1352.500 566L1373 545" stroke="#999"/><path d="M1352.500 565.500H1373V545" fill="none" stroke="#3b8fdc" stroke-dasharray="2 1"/>
<text x="1327.500" y="582" textLength="69" lengthAdjust="spacingAndGlyphs">Hide selected</text>
<text x="1349" y="595" textLength="26.700" lengthAdjust="spacingAndGlyphs">items</text>
<rect x="1420.500" y="541.500" width="27" height="21" fill="#fafafa" stroke="#888"/><rect x="1420" y="541" width="28" height="2" fill="#777"/>
<path d="M1424 547h4v3h-4zM1424 552h4v3h-4zM1424 557h4v3h-4z" fill="#3b8fdc"/><path d="M1430 548H1444M1430 553H1444M1430 558H1444" stroke="#bbb"/>
<text x="1413.500" y="582" textLength="41.400" lengthAdjust="spacingAndGlyphs">Options</text><path d="M1431 589H1437L1434 592Z" fill="#333"/>
<!-- address bar -->
<path d="M481 638H493M481 638L486 633M481 638L486 643M510 638H522M522 638L517 633M522 638L517 643" fill="none" stroke="#666" stroke-width="1.600"/>
<path d="M537 636L540.500 640L544 636" fill="none" stroke="#aaa" stroke-width="1.300"/>
<path d="M561 644V632M555 638L561 632L567 638" fill="none" stroke="#666" stroke-width="1.800"/>
<rect x="574.500" y="628.500" width="1002" height="20" fill="#fff" stroke="#dcdcdc"/>
<use href="#fsm" transform="translate(579.500,630.500)"/>
<path d="M600 635L603 638.500L600 642M664 635L667 638.500L664 642M771 635L774 638.500L771 642M877 635L880 638.500L877 642M924 635L927 638.500L924 642" fill="none" stroke="#777" stroke-width="1.200"/>
<text x="614" y="642" textLength="40" lengthAdjust="spacingAndGlyphs">This PC</text>
<text x="677.400" y="642" textLength="83.500" lengthAdjust="spacingAndGlyphs">PROGRAMS (R:)</text>
<text x="784" y="642" textLength="83.500" lengthAdjust="spacingAndGlyphs">WWO_extracted</text>
<text x="891" y="642" textLength="23" lengthAdjust="spacingAndGlyphs">Data</text>
<text x="938" y="642" textLength="34" lengthAdjust="spacingAndGlyphs">Decals</text>
<path d="M1548 636L1552 640.500L1556 636" fill="none" stroke="#555" stroke-width="1.500"/><path d="M1559.500 629V648" stroke="#dcdcdc"/>
<path d="M1573 635A4.500 4.500 0 1 0 1573.500 641M1573 632V636H1569" fill="none" stroke="#777" stroke-width="1.300"/>
<rect x="1589.500" y="628.500" width="201" height="20" fill="#fff" stroke="#dcdcdc"/>
<text x="1598" y="642" class="i" textLength="72" lengthAdjust="spacingAndGlyphs">Search Decals</text>
<circle cx="1778" cy="636" r="3.500" fill="none" stroke="#666" stroke-width="1.400"/><path d="M1775.500 639L1771.500 643" stroke="#666" stroke-width="1.800"/>

<!-- items -->
<rect x="482" y="662" width="105" height="116" fill="#d9d9d9"/>
<g transform="translate(470,650) scale(.4464,.3333)">
<!-- Materials folder -->
<polygon points="75,75 185,75 185,280 75,280" fill="#f6d98a"/>
<polygon points="100,85 190,95 190,300 112,290" fill="#f3f3f3" stroke="#e0cf9a" stroke-width="2"/>
<polygon points="130,95 210,105 210,305 150,292" fill="#fdfdfd"/>
<polygon points="75,80 112,110 112,318 75,285" fill="#fbdf90"/>
<polygon points="112,110 170,120 170,296 112,290" fill="#f4f4f4"/>
<!-- Textures folder -->
<polygon points="320,75 430,75 430,280 320,280" fill="#f6d98a"/>
<polygon points="375,92 457,105 457,305 420,290" fill="#f4efe6"/>
<rect x="425" y="110" width="25" height="55" fill="#7d6a55" filter="url(#r2)"/><rect x="430" y="230" width="22" height="50" fill="#333" filter="url(#spf)"/><rect x="425" y="175" width="22" height="45" fill="#ad9a80" filter="url(#r2)"/>
<polygon points="320,80 358,110 358,320 320,285" fill="#fbdf90"/>
<polygon points="335,85 415,125 415,320 358,292" fill="#7a7cf2"/>
<circle cx="388" cy="258" r="18" fill="#a593e0"/>
</g>
<!-- G3 atlas D -->
<g filter="url(#ts)"><rect x="708" y="666" width="91" height="90" fill="#fff"/></g>
<g transform="translate(470,650) scale(.4464,.3333)" filter="url(#r2)">
<rect x="535" y="48" width="45" height="6" fill="#aaa" opacity=".6"/>
<ellipse cx="602" cy="60" rx="13" ry="10" fill="#6d5a48"/>
<polygon points="624,50 652,50 638,72" fill="#8a6a50"/>
<ellipse cx="675" cy="58" rx="18" ry="9" fill="#4b4336"/>
<rect x="702" y="50" width="9" height="90" fill="#7c5c3f"/><rect x="721" y="55" width="8" height="65" fill="#6d5037"/>
<ellipse cx="552" cy="90" rx="14" ry="12" fill="#222" filter="url(#spf)"/>
<ellipse cx="606" cy="112" rx="11" ry="25" fill="#a58a66"/><ellipse cx="632" cy="105" rx="12" ry="24" fill="#89705a"/>
<ellipse cx="678" cy="90" rx="16" ry="11" fill="#45403a"/><ellipse cx="674" cy="122" rx="15" ry="9" fill="#3d3a35"/>
<rect x="578" y="105" width="2" height="40" fill="#999"/><rect x="585" y="105" width="2" height="40" fill="#aaa"/>
<ellipse cx="547" cy="152" rx="8" ry="12" fill="#333"/>
<rect x="580" y="155" width="62" height="6" fill="#3a3a30"/><rect x="648" y="148" width="87" height="7" fill="#e8cfa8"/>
<ellipse cx="557" cy="203" rx="26" ry="24" fill="#555"/><ellipse cx="557" cy="203" rx="13" ry="14" fill="#222"/>
<polygon points="605,195 640,185 628,212 612,215" fill="#222"/>
<ellipse cx="670" cy="190" rx="22" ry="28" fill="#33382e" filter="url(#spf)"/><ellipse cx="716" cy="190" rx="20" ry="30" fill="#2e3228" filter="url(#spf)"/>
<circle cx="662" cy="242" r="18" fill="#111"/><ellipse cx="654" cy="292" rx="24" ry="22" fill="#111" filter="url(#spf)"/>
<ellipse cx="708" cy="276" rx="22" ry="26" fill="#333" filter="url(#spf)"/>
<path d="M590 250L625 275M610 240L605 290M540 270L575 240M540 305L620 300" stroke="#777" stroke-width="1.500" fill="none"/>
</g>
<!-- G3 atlas N -->
<g filter="url(#ts)"><rect x="818" y="666" width="91" height="90" fill="#7f80f8"/></g>
<g transform="translate(470,650) scale(.4464,.3333)" fill="#9494ea" opacity=".45" filter="url(#r2)">
<ellipse cx="805" cy="85" rx="14" ry="20"/><ellipse cx="880" cy="110" rx="25" ry="40"/><ellipse cx="930" cy="95" rx="25" ry="25"/><rect x="965" y="55" width="10" height="80"/><ellipse cx="800" cy="155" rx="12" ry="14"/>
<rect x="785" y="180" width="50" height="55" fill="#8e90e8"/><ellipse cx="865" cy="205" rx="16" ry="16"/><ellipse cx="915" cy="190" rx="20" ry="28"/><ellipse cx="960" cy="190" rx="18" ry="28"/>
<circle cx="908" cy="243" r="19" fill="#b8a8d8"/><ellipse cx="950" cy="270" rx="20" ry="22"/><ellipse cx="895" cy="290" rx="22" ry="20"/>
</g>
<!-- library.xml -->
<path d="M943.500 670.500H986L1005.500 689V754H943.500Z" fill="#f6f6f6" stroke="#cfcfcf"/><path d="M986 670.500V689H1005.500Z" fill="#dedede" stroke="#cfcfcf"/>
<!-- Blood injured D -->
<g filter="url(#ts)"><rect x="1038" y="666" width="90" height="90" fill="#fff"/></g>
<g class="a"><use href="#art" transform="translate(1038,666) scale(.0879) translate(-7,-218)"/>
<ellipse cx="1101.700" cy="728" rx="9" ry="5"/>
<circle cx="1090" cy="722" r=".8"/><circle cx="1112" cy="719" r=".8"/><circle cx="1095" cy="735" r=".8"/><circle cx="1108" cy="738" r=".8"/><circle cx="1085" cy="732" r=".7"/><circle cx="1118" cy="730" r=".7"/><circle cx="1100" cy="716" r=".7"/><circle cx="1092" cy="745" r=".7"/><circle cx="1105" cy="744" r=".7"/><circle cx="1115" cy="742" r=".7"/><circle cx="1084" cy="742" r=".7"/><circle cx="1090" cy="712" r=".7"/><circle cx="1120" cy="715" r=".7"/>
</g>
<!-- Blood injured N -->
<g filter="url(#ts)"><rect x="1148" y="666" width="90" height="90" fill="#8080ff"/></g>
<g fill="#7676ee" opacity=".18"><use href="#art" transform="translate(1148,666) scale(.0879) translate(-7,-218)"/></g>
<!-- Splatter 01 D -->
<g filter="url(#ts)"><rect x="1258" y="666" width="90.500" height="90" fill="#fff"/></g>
<g transform="translate(1030,650) scale(.4405,.3333)" class="a" filter="url(#r2)">
<polygon points="560,130 590,115 600,85 625,60 645,90 655,110 680,130 675,145 650,150 630,175 595,160 580,145 545,140" filter="url(#spf)"/>
<polygon points="585,130 605,100 625,85 645,110 660,135 640,150 610,152"/>
<path d="M528 128L690 135M620 60L670 55M570 165L640 178" stroke="#1e0000" stroke-width="2.500"/>
<polygon points="550,205 572,205 588,245 570,255 560,255 548,240"/>
<path d="M553 250V315M572 255V305" stroke="#333" stroke-width="2.500"/>
<ellipse cx="670" cy="265" rx="27" ry="22"/>
<path d="M615 250L700 270M660 215L680 300M690 290L710 310" stroke="#1e0000" stroke-width="2"/>
</g>
<!-- Splatter 01 N -->
<g filter="url(#ts)"><rect x="1368" y="666" width="91" height="90" fill="#8080ff"/></g>
<path d="M1380 706L1445 711M1420 680L1425 715M1384 745V730L1395 745M1430 745Q1445 725 1450 735" stroke="#7474e6" stroke-width="1.200" fill="none" opacity=".4"/>
<!-- Splatter 02 D -->
<g filter="url(#ts)"><rect x="1478.500" y="666" width="90.500" height="90" fill="#fff"/></g>
<g transform="translate(1030,650) scale(.4405,.3333)" class="a" filter="url(#r2)">
<ellipse cx="1100" cy="185" rx="50" ry="58" filter="url(#spf)"/>
<polygon points="1070,180 1090,155 1105,145 1128,150 1145,168 1135,205 1120,225 1090,232 1078,212"/>
<path d="M1125 150L1215 70M1100 230L1105 290M1130 225L1195 295M1070 215L1035 250M1065 170L1030 150M1140 180L1210 190M1095 140L1060 110M1150 100L1175 85" stroke="#1e0000" stroke-width="1.600"/>
<circle cx="1045" cy="103" r="4"/><circle cx="1066" cy="110" r="4"/><circle cx="1155" cy="97" r="6"/><circle cx="1200" cy="145" r="6"/><circle cx="1175" cy="160" r="5"/><circle cx="1188" cy="272" r="7"/><circle cx="1165" cy="275" r="5"/><circle cx="1108" cy="272" r="7"/><circle cx="1050" cy="160" r="6"/><circle cx="1040" cy="200" r="5"/><circle cx="1055" cy="190" r="4"/><circle cx="1068" cy="240" r="5"/><circle cx="1030" cy="250" r="3"/><circle cx="1205" cy="180" r="4"/><circle cx="1145" cy="245" r="3"/>
</g>
<!-- Splatter 02 N -->
<g filter="url(#ts)"><rect x="1588.500" y="666" width="90.500" height="90" fill="#8080ff"/></g>
<path d="M1600 735L1670 680M1620 700L1660 740M1610 715L1650 715" stroke="#7676ea" stroke-width="1.200" opacity=".35"/>
<ellipse cx="1632" cy="712" rx="14" ry="14" fill="#7878ef" opacity=".3"/>

<!-- labels -->
<g text-anchor="middle">
<text x="535" y="771.500" textLength="48" lengthAdjust="spacingAndGlyphs">Materials</text>
<text x="644.500" y="771.500" textLength="43" lengthAdjust="spacingAndGlyphs">Textures</text>
<text x="753.500" y="771.500" textLength="90" lengthAdjust="spacingAndGlyphs">G3_Decal_Atlas_0</text>
<text x="753.500" y="786.500" textLength="44" lengthAdjust="spacingAndGlyphs">1_D.dds</text>
<text x="864" y="771.500" textLength="90" lengthAdjust="spacingAndGlyphs">G3_Decal_Atlas_0</text>
<text x="864" y="786.500" textLength="44" lengthAdjust="spacingAndGlyphs">1_N.dds</text>
<text x="974" y="771.500" textLength="55" lengthAdjust="spacingAndGlyphs">library.xml</text>
<text x="1084" y="771.500" textLength="89" lengthAdjust="spacingAndGlyphs">SS_Blood_Injured</text>
<text x="1084" y="786.500" textLength="53" lengthAdjust="spacingAndGlyphs">_01_D.dds</text>
<text x="1194" y="771.500" textLength="89" lengthAdjust="spacingAndGlyphs">SS_Blood_Injured</text>
<text x="1194" y="786.500" textLength="53" lengthAdjust="spacingAndGlyphs">_01_N.dds</text>
<text x="1304" y="771.500" textLength="88" lengthAdjust="spacingAndGlyphs">SS_BloodSplatter</text>
<text x="1304" y="786.500" textLength="53" lengthAdjust="spacingAndGlyphs">_01_D.dds</text>
<text x="1414" y="771.500" textLength="88" lengthAdjust="spacingAndGlyphs">SS_BloodSplatter</text>
<text x="1414" y="786.500" textLength="53" lengthAdjust="spacingAndGlyphs">_01_N.dds</text>
<text x="1524" y="771.500" textLength="88" lengthAdjust="spacingAndGlyphs">SS_BloodSplatter</text>
<text x="1524" y="786.500" textLength="53" lengthAdjust="spacingAndGlyphs">_02_D.dds</text>
<text x="1634" y="771.500" textLength="88" lengthAdjust="spacingAndGlyphs">SS_BloodSplatter</text>
<text x="1634" y="786.500" textLength="53" lengthAdjust="spacingAndGlyphs">_02_N.dds</text>
</g>
<!-- status bar -->
<text x="482" y="1310" style="fill:#33334d" textLength="44" lengthAdjust="spacingAndGlyphs">11 items</text>
<path d="M536.500 1298V1314M636.500 1298V1314" stroke="#e8e8e8"/>
<text x="547.700" y="1310" style="fill:#33334d" textLength="78" lengthAdjust="spacingAndGlyphs">1 item selected</text>
<path d="M1758 1299h4v3h-4zM1758 1304h4v3h-4zM1758 1309h4v3h-4z" fill="#fff" stroke="#999"/><path d="M1765 1300H1774M1765 1305H1774M1765 1310H1774" stroke="#888"/>
<rect x="1777.500" y="1294.500" width="21" height="21" fill="#d6eaf8" stroke="#52aee0"/>
<rect x="1782" y="1300" width="12" height="9" fill="#e8f2fa" stroke="#667"/><rect x="1783" y="1304" width="10" height="4" fill="#2f6d86"/>
</svg>
</body></html>
